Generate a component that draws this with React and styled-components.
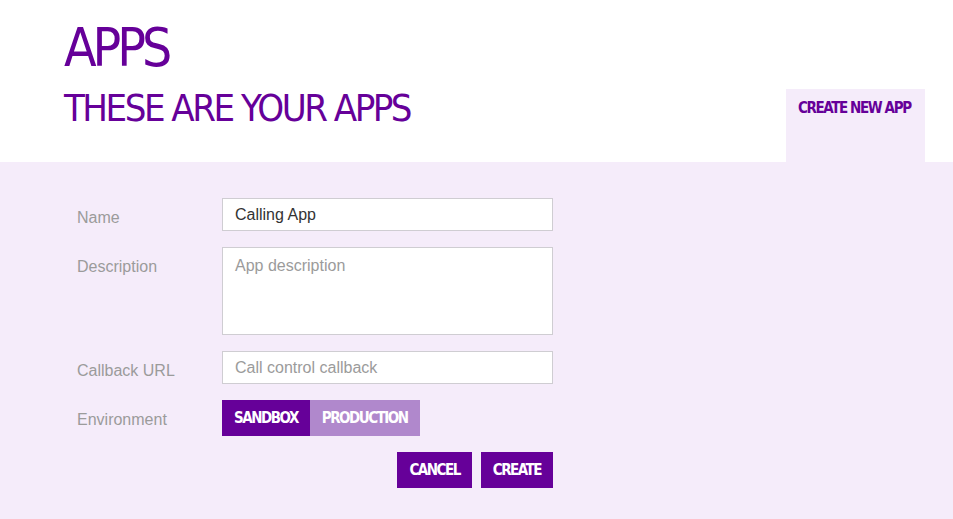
import React from 'react';
import styled, { createGlobalStyle } from 'styled-components';

const GlobalStyle = createGlobalStyle`
    html, body {
        margin: 0;
        padding: 0;
        background: #f5ecfa;
    }
    body {
        font-family: "Liberation Sans", Arial, sans-serif;
    }
`;

const narrow = `"DejaVu Sans Condensed", "Liberation Sans", sans-serif`;

const purple = '#660099';

const Header = styled.header`
    display: flex;
    align-items: flex-end;
    height: 162px;
    padding: 0 28px 0 64px;
    background: #ffffff;
`;

const Titles = styled.div`
    display: flex;
    flex-direction: column;
    align-self: flex-start;
    padding-top: 18px;
`;

const Title = styled.h1`
    margin: 0;
    font-family: ${narrow};
    font-weight: 400;
    font-size: 53px;
    line-height: 60px;
    letter-spacing: -4px;
    color: ${purple};
`;

const Subtitle = styled.h2`
    margin: 10px 0 0;
    font-family: ${narrow};
    font-weight: 400;
    font-size: 38px;
    line-height: 40px;
    letter-spacing: -2.5px;
    color: ${purple};
`;

const Tab = styled.button`
    margin-left: auto;
    align-self: flex-end;
    width: 139px;
    height: 73px;
    padding: 10px 0 0 12px;
    border: 0;
    background: #f5ecfa;
    display: flex;
    align-items: flex-start;
    white-space: nowrap;
    font-family: ${narrow};
    font-weight: 700;
    font-size: 15px;
    letter-spacing: -1.4px;
    color: ${purple};
    cursor: pointer;
`;

const Panel = styled.main`
    padding: 36px 0 30px 77px;
`;

const Form = styled.form`
    display: grid;
    grid-template-columns: 145px 331px;
    row-gap: 16px;
    align-items: start;
`;

const Label = styled.label`
    padding-top: 10px;
    font-size: 16px;
    line-height: 20px;
    color: #9b9b9b;
`;

const Input = styled.input`
    box-sizing: border-box;
    width: 100%;
    height: 33px;
    margin: 0;
    padding: 0 12px;
    border: 1px solid #cfcdd2;
    background: #ffffff;
    font-family: "Liberation Sans", Arial, sans-serif;
    font-size: 16px;
    color: #333333;
    outline: none;
    &::placeholder {
        color: #9b9b9b;
    }
`;

const TextArea = styled.textarea`
    box-sizing: border-box;
    display: block;
    width: 100%;
    height: 88px;
    margin: 0;
    padding: 8px 12px;
    border: 1px solid #cfcdd2;
    background: #ffffff;
    font-family: "Liberation Sans", Arial, sans-serif;
    font-size: 16px;
    line-height: 20px;
    color: #333333;
    resize: none;
    outline: none;
    &::placeholder {
        color: #9b9b9b;
    }
`;

const Toggle = styled.div`
    display: flex;
`;

const Button = styled.button`
    height: 36px;
    padding: 0 12px;
    border: 0;
    margin: 0;
    background: ${(p) => (p.$light ? '#b088cc' : purple)};
    font-family: ${narrow};
    font-weight: 700;
    font-size: 15px;
    letter-spacing: -1.5px;
    color: #ffffff;
    cursor: pointer;
`;

const Actions = styled.div`
    grid-column: 2;
    display: flex;
    justify-content: flex-end;
    gap: 9px;
`;

export default function App() {
    return (
        <>
            <GlobalStyle />
            <Header>
                <Titles>
                    <Title>APPS</Title>
                    <Subtitle>THESE ARE YOUR APPS</Subtitle>
                </Titles>
                <Tab type="button">CREATE NEW APP</Tab>
            </Header>
            <Panel>
                <Form onSubmit={(e) => e.preventDefault()}>
                    <Label>Name</Label>
                    <Input defaultValue="Calling App" />
                    <Label>Description</Label>
                    <TextArea placeholder="App description" />
                    <Label>Callback URL</Label>
                    <Input placeholder="Call control callback" />
                    <Label>Environment</Label>
                    <Toggle>
                        <Button type="button">SANDBOX</Button>
                        <Button type="button" $light>PRODUCTION</Button>
                    </Toggle>
                    <Actions>
                        <Button type="button">CANCEL</Button>
                        <Button type="submit">CREATE</Button>
                    </Actions>
                </Form>
            </Panel>
        </>
    );
}
